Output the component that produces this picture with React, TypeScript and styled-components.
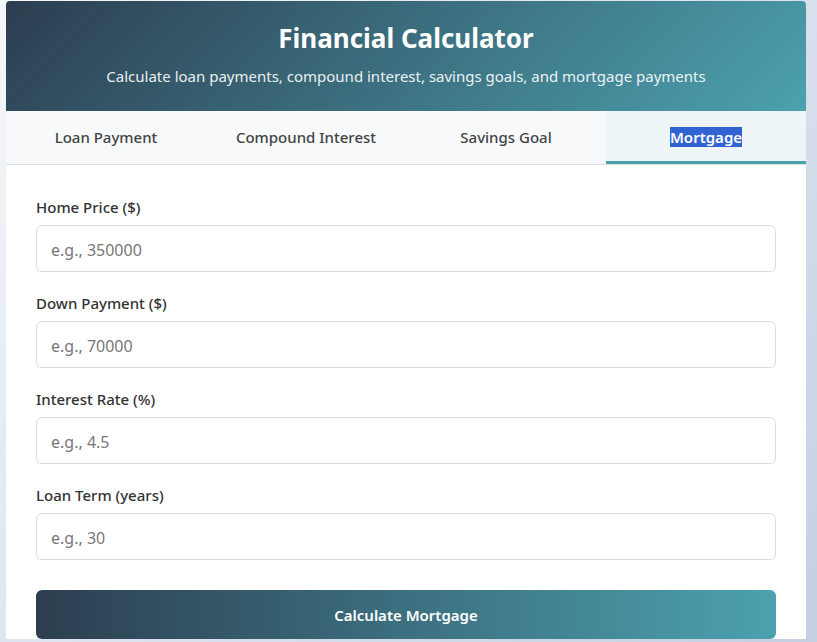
import React from "react";
import styled, { createGlobalStyle } from "styled-components";

const Global = createGlobalStyle`
  html, body { margin: 0; padding: 0; }
  body {
    font-family: "Noto Sans", "Open Sans", sans-serif;
    background: linear-gradient(135deg, #f5f7fa 0%, #c3cfe2 100%);
    min-height: 642px;
    overflow: hidden;
  }
  * { box-sizing: border-box; }
`;

const Page = styled.div`
  padding: 1px 11px 0 6px;
`;

const Card = styled.div`
  width: 800px;
  background: #fff;
  border-radius: 4px 4px 0 0;
  overflow: hidden;
`;

const Header = styled.header`
  height: 110px;
  background: linear-gradient(135deg, #2c3e50 0%, #4ca1af 100%);
  color: #fff;
  text-align: center;
  padding-top: 18px;
`;

const Title = styled.h1`
  margin: 0;
  font-size: 26px;
  font-weight: 700;
  line-height: 38px;
`;

const Subtitle = styled.p`
  margin: 8px 0 0;
  font-size: 15px;
  line-height: 22px;
  opacity: 0.9;
`;

const Tabs = styled.nav`
  display: grid;
  grid-template-columns: repeat(4, 1fr);
  background: #f8f9fa;
  border-bottom: 1px solid #e0e0e0;
`;

const Tab = styled.div<{ $active?: boolean }>`
  height: 53px;
  display: flex;
  align-items: center;
  justify-content: center;
  font-size: 15px;
  font-weight: 500;
  color: #444;
  background: ${(p) => (p.$active ? "#eef5f7" : "transparent")};
  border-bottom: 3px solid ${(p) => (p.$active ? "#4ca1af" : "transparent")};
  padding-top: 1px;
`;

const Selected = styled.span`
  background: #3163d3;
  color: #fff;
  font-weight: 600;
`;

const Form = styled.form`
  padding: 31px 30px 0;
  display: flex;
  flex-direction: column;
`;

const Group = styled.div`
  margin-bottom: 20px;
`;

const Label = styled.label`
  display: block;
  font-size: 15px;
  font-weight: 500;
  color: #333;
  line-height: 22px;
  margin-bottom: 7px;
`;

const Input = styled.input`
  display: block;
  width: 100%;
  height: 47px;
  padding: 2px 14px 0;
  border: 1px solid #ddd;
  border-radius: 6px;
  font-family: inherit;
  font-size: 16px;
  color: #333;
  outline: none;
  &::placeholder { color: #787878; }
`;

const Button = styled.button`
  margin-top: 10px;
  height: 49px;
  border: none;
  border-radius: 6px;
  background: linear-gradient(90deg, #2c3e50 0%, #4ca1af 100%);
  color: #fff;
  font-family: inherit;
  font-size: 15px;
  font-weight: 600;
`;

const fields = [
  { label: "Home Price ($)", ph: "e.g., 350000" },
  { label: "Down Payment ($)", ph: "e.g., 70000" },
  { label: "Interest Rate (%)", ph: "e.g., 4.5" },
  { label: "Loan Term (years)", ph: "e.g., 30" },
];

export default function App() {
  return (
    <>
      <Global />
      <Page>
        <Card>
          <Header>
            <Title>Financial Calculator</Title>
            <Subtitle>Calculate loan payments, compound interest, savings goals, and mortgage payments</Subtitle>
          </Header>
          <Tabs>
            <Tab>Loan Payment</Tab>
            <Tab>Compound Interest</Tab>
            <Tab>Savings Goal</Tab>
            <Tab $active><Selected>Mortgage</Selected></Tab>
          </Tabs>
          <Form onSubmit={(e) => e.preventDefault()}>
            {fields.map((f) => (
              <Group key={f.label}>
                <Label>{f.label}</Label>
                <Input type="number" placeholder={f.ph} />
              </Group>
            ))}
            <Button type="submit">Calculate Mortgage</Button>
          </Form>
        </Card>
      </Page>
    </>
  );
}
